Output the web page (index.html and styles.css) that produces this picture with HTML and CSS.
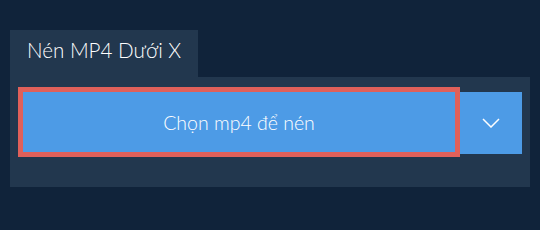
FILE: index.html
```html
<!DOCTYPE html>
<html lang="vi">
<head>
    <meta charset="UTF-8">
    <meta name="viewport" content="width=device-width, initial-scale=1.0">
    <title>Nén MP4 Dưới X</title>
    <link rel="stylesheet" href="styles.css">
</head>
<body>
    <div class="wrapper">
        <div class="tab">Nén MP4 Dưới X</div>
        <div class="panel">
            <div class="upload-row">
                <button class="upload-button">Chọn mp4 để nén</button>
                <button class="dropdown-button" aria-label="Thêm tùy chọn">
                    <svg width="18" height="10" viewBox="0 0 18 10">
                        <polyline points="1,1 9,9 17,1" fill="none" stroke="#fff" stroke-width="1.5"/>
                    </svg>
                </button>
            </div>
        </div>
    </div>
</body>
</html>
```

FILE: styles.css
```css
body {
    font-family: 'Lato', 'Open Sans', sans-serif;
    background-color: #10233a;
    margin: 0;
    padding: 0;
}
.wrapper {
    padding: 30px 10px 0 10px;
}
.tab {
    display: inline-block;
    box-sizing: border-box;
    height: 47px;
    padding: 8px 17px 0 17px;
    background-color: #22374e;
    color: #fff;
    font-size: 20.6px;
    font-weight: 300;
    line-height: 24px;
}
.panel {
    background-color: #22374e;
    height: 110px;
    box-sizing: border-box;
    padding: 10px 8px 0 8px;
}
.upload-row {
    display: flex;
    align-items: flex-start;
}
.upload-button {
    width: 442px;
    height: 70px;
    box-sizing: border-box;
    border: 5px solid #e0605a;
    background-color: #4d9be6;
    color: #fff;
    font-family: inherit;
    font-size: 19.5px;
    font-weight: 300;
    padding: 0;
    cursor: pointer;
}
.dropdown-button {
    width: 62px;
    height: 62px;
    margin-top: 5px;
    border: none;
    padding: 0;
    background-color: #4d9be6;
    display: flex;
    align-items: center;
    justify-content: center;
    cursor: pointer;
}
```
